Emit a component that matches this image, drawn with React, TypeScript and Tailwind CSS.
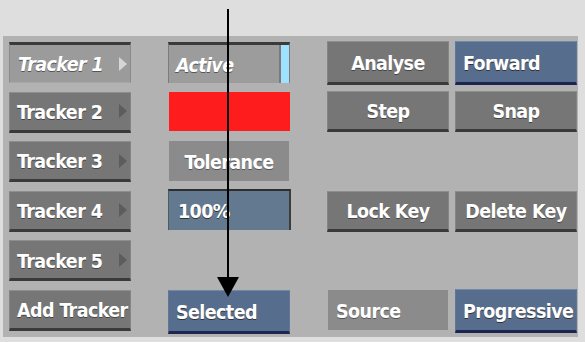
import type { ReactNode } from 'react'

const font = { fontFamily: '"DejaVu Sans Condensed", "DejaVu Sans", sans-serif' }
const label = 'mt-[3px] text-[19.5px] font-bold tracking-[-0.6px] leading-none whitespace-nowrap'

function Raised({ children, align = 'center', arrow = false }: { children: ReactNode; align?: 'left' | 'center'; arrow?: boolean }) {
  return (
    <div className={`w-[122px] h-[41px] flex items-center bg-[#767676] border-t border-t-[#8e8e8e] border-x border-x-[#858585] border-b-[3px] border-b-[#3a3a3a] text-white ${align === 'left' ? 'pl-[7px]' : ''}`}>
      <span className={`flex-1 ${label} [text-shadow:0_1px_0_#444]`} style={{ textAlign: align }}>{children}</span>
      {arrow && <span className="mr-[3px] w-0 h-0 border-y-[7px] border-y-transparent border-l-[8px] border-l-[#5c5c5c]" />}
    </div>
  )
}

function BlueRaised({ children }: { children: ReactNode }) {
  return (
    <div className="w-[122px] h-[44px] flex items-center bg-[#566d8d] border-t border-t-[#7189a8] border-x border-x-[#60779a] border-b-[3px] border-b-[#1e2550] pl-[7px] text-white">
      <span className={`${label} [text-shadow:0_1px_0_#333]`}>{children}</span>
    </div>
  )
}

function Flat({ children, align = 'center' }: { children: ReactNode; align?: 'left' | 'center' }) {
  return (
    <div className={`ml-px w-[120px] h-[40px] flex items-center bg-[#8b8b8b] text-white ${align === 'left' ? 'pl-[8px]' : 'justify-center'}`}>
      <span className={`${label} [text-shadow:0_1px_0_#555]`}>{children}</span>
    </div>
  )
}

export default function App() {
  return (
    <div className="relative w-[585px] h-[342px] bg-[#dedede] overflow-hidden" style={font}>
      <div className="mt-[36px] ml-[3px] w-[575px] h-[301px] bg-[#b2b2b2] pt-[6px] pl-[6px]">
        <div className="grid grid-cols-[159px_159px_128px_122px] auto-rows-[41px] gap-y-[8.6px]">
          {/* row 1 */}
          <div className="w-[122px] h-[41px] flex items-center bg-[#9b9b9b] border-t-[3px] border-t-[#3a3a3a] border-x border-x-[#8a8a8a] border-b border-b-[#a8a8a8] pl-[8px] text-white">
            <span className={`flex-1 ${label} italic [text-shadow:0_1px_0_#555]`}>Tracker 1</span>
            <span className="mr-[3px] w-0 h-0 border-y-[7px] border-y-transparent border-l-[8px] border-l-[#d6d6d6]" />
          </div>
          <div className="w-[122px] h-[41px] flex items-stretch bg-[#9c9c9c] border-t-[3px] border-t-[#3a3a3a] border-x border-x-[#7c7c7c] text-white">
            <span className={`flex-1 self-center pl-[7px] ${label} italic [text-shadow:0_1px_0_#555]`}>Active</span>
            <span className="w-[10px] bg-[#9ee2ff] border-l-2 border-l-[#7a7a7a]" />
          </div>
          <div className="-mt-px">
            <div className="w-[122px] h-[44px] flex items-center justify-center bg-[#767676] border-t border-t-[#8e8e8e] border-x border-x-[#858585] border-b-[3px] border-b-[#3a3a3a] text-white">
              <span className={`${label} [text-shadow:0_1px_0_#444]`}>Analyse</span>
            </div>
          </div>
          <div className="-mt-px"><BlueRaised>Forward</BlueRaised></div>

          {/* row 2 */}
          <Raised align="left" arrow>Tracker 2</Raised>
          <div className="w-[121px] h-[39px] ml-px bg-[#ff1c1c]" />
          <div className="-mt-px"><Raised>Step</Raised></div>
          <div className="-mt-px"><Raised>Snap</Raised></div>

          {/* row 3 */}
          <Raised align="left" arrow>Tracker 3</Raised>
          <Flat>Tolerance</Flat>
          <div />
          <div />

          {/* row 4 */}
          <Raised align="left" arrow>Tracker 4</Raised>
          <div className="-mt-[2px] w-[123px] h-[41px] flex items-center bg-[#62798f] border-t-2 border-t-[#2e2e2e] border-r-2 border-r-[#3c3c3c] border-l border-l-[#4c5a6a] pl-[9px] text-white">
            <span className={`${label} [text-shadow:0_1px_0_#333]`}>100%</span>
          </div>
          <Raised>Lock Key</Raised>
          <Raised>Delete Key</Raised>

          {/* row 5 */}
          <Raised align="left" arrow>Tracker 5</Raised>
          <div />
          <div />
          <div />

          {/* row 6 */}
          <Raised align="left">Add Tracker</Raised>
          <BlueRaised>Selected</BlueRaised>
          <Flat align="left">Source</Flat>
          <div className="-mt-[1px]"><BlueRaised>Progressive</BlueRaised></div>
        </div>
      </div>

      {/* annotation arrow */}
      <svg className="absolute left-0 top-0 pointer-events-none" width="585" height="342">
        <line x1="228" y1="9" x2="228" y2="280" stroke="#000" strokeWidth="2" />
        <polygon points="217,277 239,277 228,297" fill="#000" />
      </svg>
    </div>
  )
}
